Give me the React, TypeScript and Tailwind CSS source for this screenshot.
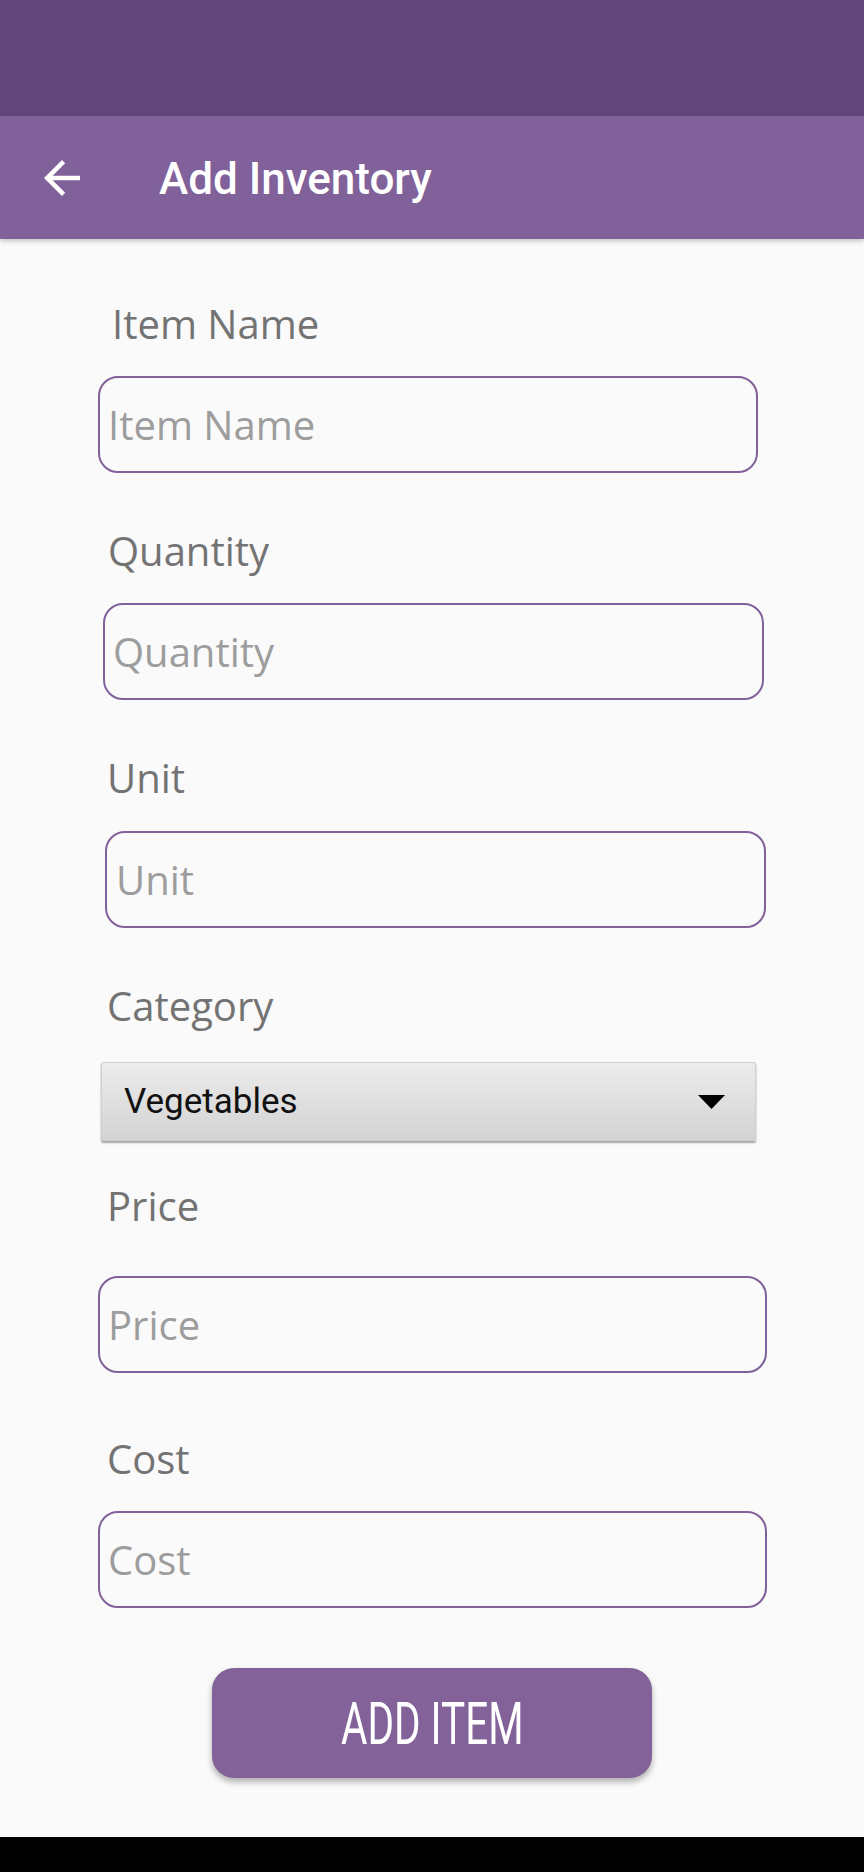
import React from "react";

const labelCls =
  "text-[40px] leading-[54px] text-[#737373] font-['Open_Sans','Noto_Sans',sans-serif]";
const phCls =
  "text-[40px] leading-[54px] text-[#9d9d9d] font-['Open_Sans','Noto_Sans',sans-serif]";
const fieldCls =
  "h-[97px] box-border border-2 border-[#80619a] rounded-[20px] flex items-center";

export default function App() {
  return (
    <div className="w-[864px] h-[1872px] flex flex-col bg-[#fafafa] overflow-hidden">
      {/* status bar */}
      <div className="h-[116px] bg-[#634679] shrink-0" />
      {/* toolbar */}
      <div className="h-[123px] bg-[#81619a] shrink-0 flex items-center relative z-10 shadow-[0_2px_5px_rgba(0,0,0,0.22)]">
        <svg
          className="ml-[35px] w-[54px] h-[54px] shrink-0"
          viewBox="0 0 24 24"
          fill="#ffffff"
        >
          <path d="M20 11H7.83l5.59-5.59L12 4l-8 8 8 8 1.41-1.41L7.83 13H20v-2z" />
        </svg>
        <div className="ml-[70px] pt-[3px] text-[44px] leading-[52px] font-medium text-white font-['Roboto',sans-serif]">
          Add Inventory
        </div>
      </div>

      {/* form */}
      <div className="flex flex-col">
        <div className={`${labelCls} mt-[58px] ml-[112px]`}>Item Name</div>
        <div className={`${fieldCls} mt-[25px] ml-[98px] w-[660px] pl-[8px]`}>
          <span className={phCls}>Item Name</span>
        </div>

        <div className={`${labelCls} mt-[51px] ml-[108px]`}>Quantity</div>
        <div className={`${fieldCls} mt-[25px] ml-[103px] w-[661px] pl-[8px]`}>
          <span className={phCls}>Quantity</span>
        </div>

        <div className={`${labelCls} mt-[51px] ml-[107px]`}>Unit</div>
        <div className={`${fieldCls} mt-[26px] ml-[105px] w-[661px] pl-[9px]`}>
          <span className={phCls}>Unit</span>
        </div>

        <div className={`${labelCls} mt-[51px] ml-[107px]`}>Category</div>
        <div className="mt-[29px] ml-[101px] w-[655px] h-[79px] box-border rounded-[2px] border border-[#d0d0d0] bg-gradient-to-b from-[#ececec] to-[#d3d3d3] shadow-[0_2px_2px_rgba(0,0,0,0.35)] flex items-center justify-between">
          <span className="ml-[22px] text-[35px] leading-[42px] text-[#111111] font-['Roboto',sans-serif]">
            Vegetables
          </span>
          <svg className="mr-[30px] w-[27px] h-[14px]" viewBox="0 0 27 14">
            <polygon points="0,0 27,0 13.5,14" fill="#000000" />
          </svg>
        </div>

        <div className={`${labelCls} mt-[38px] ml-[107px]`}>Price</div>
        <div className={`${fieldCls} mt-[43px] ml-[98px] w-[669px] pl-[8px]`}>
          <span className={phCls}>Price</span>
        </div>

        <div className={`${labelCls} mt-[59px] ml-[107px]`}>Cost</div>
        <div className={`${fieldCls} mt-[25px] ml-[98px] w-[669px] pl-[8px]`}>
          <span className={phCls}>Cost</span>
        </div>

        <div className="mt-[60px] mx-auto w-[440px] h-[110px] rounded-[22px] bg-[#83629a] shadow-[0_4px_6px_rgba(0,0,0,0.3)] flex items-center justify-center">
          <span className="inline-block scale-x-[0.675] text-[60px] leading-[70px] pt-[2px] text-white font-['Roboto',sans-serif]">
            ADD ITEM
          </span>
        </div>
      </div>

      <div className="mt-auto h-[35px] bg-black shrink-0" />
    </div>
  );
}
